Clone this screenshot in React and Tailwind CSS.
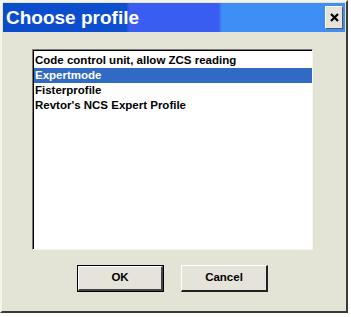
export default function App() {
  const items = [
    "Code control unit, allow ZCS reading",
    "Expertmode",
    "Fisterprofile",
    "Revtor's NCS Expert Profile",
  ];
  return (
    <div className="w-[351px] h-[317px] bg-white" style={{ fontFamily: '"Liberation Sans", Arial, sans-serif' }}>
      <div className="w-[348px] h-[313px] bg-[#e3e3d6] border-l-2 border-t-2 border-l-[#f4f4ec] border-t-[#f4f4ec] border-r-2 border-b-2 border-r-[#3a3a36] border-b-[#3a3a36] flex flex-col">
        <div className="mx-[1px] mt-[1px] h-[29px] flex items-center justify-between bg-[linear-gradient(90deg,#0b4ccb_0%,#0e4fd0_36%,#3a5df1_37%,#3a5df1_63%,#3e8ef5_64%,#3e8ef5_100%)]">
          <span className="text-white font-bold text-[19px] pl-[3px] leading-none">Choose profile</span>
          <div className="w-[18px] h-[23px] mr-[2px] bg-[#e6e4da] border-t border-l border-t-white border-l-white border-r border-b border-r-[#555] border-b-[#555] flex items-center justify-center">
            <svg width="9" height="9" viewBox="0 0 9 9">
              <path d="M1 1 L8 8 M8 1 L1 8" stroke="#000" strokeWidth="2.2" />
            </svg>
          </div>
        </div>
        <div className="ml-[30px] mt-[17px] w-[281px] h-[201px] bg-white border-l border-t border-l-[#7a7a72] border-t-[#7a7a72] border-r border-b border-r-[#f6f6ef] border-b-[#f6f6ef]">
          <div className="w-full h-full border-l border-t border-l-black border-t-black pt-[2px] pl-[0px]">
            {items.map((t, i) => (
              <div
                key={i}
                className={`h-[15px] pl-[1px] flex items-center text-[11.5px] font-bold leading-none ${i === 1 ? "bg-[#316ac5] text-white" : "text-black"}`}
              >
                {t}
              </div>
            ))}
          </div>
        </div>
        <div className="flex gap-[17px] ml-[75px] mt-[15px]">
          <div className="w-[87px] h-[27px] border border-black flex">
            <div className="flex-1 bg-[#e6e4da] border-t border-l border-t-white border-l-white border-r-2 border-b-2 border-r-[#444] border-b-[#444] flex items-center justify-center text-[11.5px] font-bold">
              OK
            </div>
          </div>
          <div className="w-[87px] h-[27px] bg-[#e6e4da] border-t border-l border-t-white border-l-white border-r-2 border-b-2 border-r-[#222] border-b-[#222] flex items-center justify-center text-[11.5px] font-bold">
            Cancel
          </div>
        </div>
      </div>
    </div>
  );
}
